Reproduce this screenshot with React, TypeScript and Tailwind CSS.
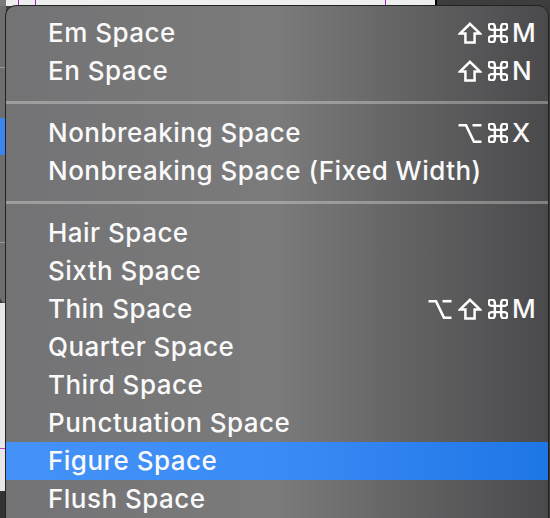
import React from "react";

const Shift = () => (
  <svg width="24" height="22" viewBox="0 0 24 22" fill="none" stroke="white" strokeWidth="2.5" strokeLinejoin="miter">
    <path d="M12 1.8 L22 11.5 H16.6 V20.6 H7.4 V11.5 H2 Z" />
  </svg>
);

const Cmd = () => (
  <svg width="20" height="20" viewBox="2.5 2.5 19 19" fill="none" stroke="white" strokeWidth="2.3">
    <path d="M15 6v12a3 3 0 1 0 3-3H6a3 3 0 1 0 3 3V6a3 3 0 1 0-3 3h12a3 3 0 1 0-3-3" />
  </svg>
);

const Opt = () => (
  <svg width="24" height="20" viewBox="0 0 24 20" fill="none" stroke="white" strokeWidth="2.6">
    <path d="M0.5 2.2 H8 L16 18.8 H23.5" />
    <path d="M14.5 2.2 H23.5" />
  </svg>
);

type Item = { label: string; mods?: ("opt" | "shift" | "cmd")[]; key?: string; hl?: boolean };

const groups: Item[][] = [
  [
    { label: "Em Space", mods: ["shift", "cmd"], key: "M" },
    { label: "En Space", mods: ["shift", "cmd"], key: "N" },
  ],
  [
    { label: "Nonbreaking Space", mods: ["opt", "cmd"], key: "X" },
    { label: "Nonbreaking Space (Fixed Width)" },
  ],
  [
    { label: "Hair Space" },
    { label: "Sixth Space" },
    { label: "Thin Space", mods: ["opt", "shift", "cmd"], key: "M" },
    { label: "Quarter Space" },
    { label: "Third Space" },
    { label: "Punctuation Space" },
    { label: "Figure Space", hl: true },
    { label: "Flush Space" },
  ],
];

function Row({ item }: { item: Item }) {
  return (
    <div
      className={
        "flex h-[38px] items-center text-[26px] font-medium tracking-[0.48px] leading-none text-[#fafafa] " +
        (item.hl ? "bg-gradient-to-r from-[#4492f8] via-[#3a8bf6] to-[#1e76e6]" : "")
      }
    >
      <span className="flex-1 pl-[42px] whitespace-nowrap">{item.label}</span>
      {item.key && (
        <>
          <div className="flex items-center gap-[6px]">
            {item.mods!.map((m, i) =>
              m === "opt" ? <Opt key={i} /> : m === "shift" ? <Shift key={i} /> : <Cmd key={i} />
            )}
          </div>
          <span className="w-[40px] pl-[4px]">{item.key}</span>
        </>
      )}
      {!item.key && <span className="w-[37px]" />}
    </div>
  );
}

export default function App() {
  return (
    <div
      className="relative w-[550px] h-[518px] overflow-hidden bg-[#3c3c3c]"
      style={{ fontFamily: "Inter, 'Noto Sans', sans-serif" }}
    >
      {/* background window behind */}
      <div className="flex h-[6px]">
        <div className="w-[6px] bg-[#7a7a7a]" />
        <div className="flex w-[429px] bg-[#eeeeee]">
          <div className="w-[12px]" />
          <div className="w-px bg-[#a020c8]" />
          <div className="w-[16px]" />
          <div className="w-px bg-[#a020c8]" />
          <div className="w-[349px]" />
          <div className="w-px bg-[#a020c8]" />
        </div>
        <div className="w-[2px] bg-black" />
        <div className="flex-1 bg-[#3d3d3d]" />
      </div>
      <div className="flex h-[512px] w-[6px] flex-col">
        <div className="h-[61px] bg-[#6e6e6e]" />
        <div className="h-px bg-[#9a9a9a]" />
        <div className="h-[50px] bg-[#6e6e6e]" />
        <div className="h-[37px] bg-[#3b86ee]" />
        <div className="h-[87px] bg-[#6e6e6e]" />
        <div className="h-px bg-[#9a9a9a]" />
        <div className="h-[60px] rounded-bl-[6px] bg-[#6e6e6e]" />
        <div className="h-[145px] bg-[#e8e8e8]" />
        <div className="h-px bg-[#c040d0]" />
        <div className="h-[42px] bg-[#e8e8e8]" />
        <div className="flex-1 bg-[#333333]" />
      </div>

      {/* menu overlay */}
      <div className="absolute left-[5px] top-[5px] right-px bottom-[-20px] rounded-t-[11px] border border-[#222222] bg-gradient-to-r from-[#737375] via-[#7b7b7c] to-[#4a4a4c] pt-[8px] overflow-hidden">
        {groups.map((g, gi) => (
          <div key={gi}>
            {gi > 0 && (
              <div className="flex h-[24px] items-center">
                <div className="h-[3px] w-full bg-white/30" />
              </div>
            )}
            {g.map((it, i) => (
              <Row key={i} item={it} />
            ))}
          </div>
        ))}
      </div>
    </div>
  );
}
